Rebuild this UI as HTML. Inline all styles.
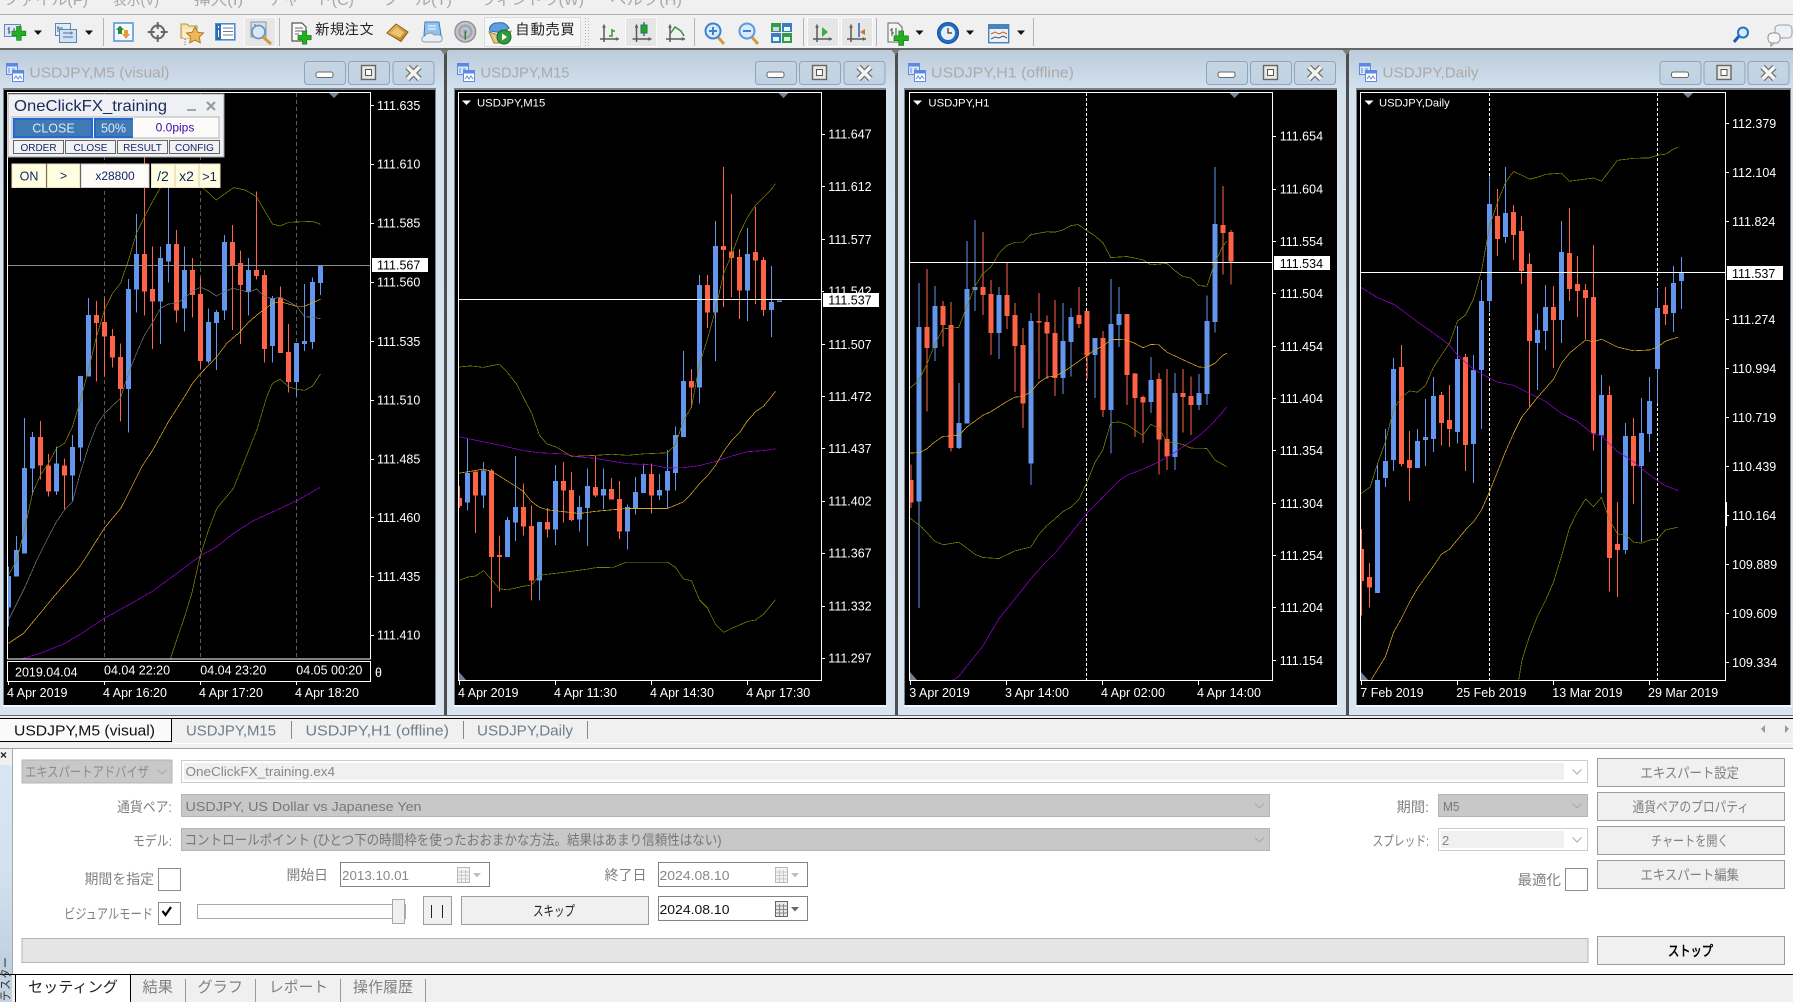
<!DOCTYPE html>
<html lang="ja"><head><meta charset="utf-8"><title>MT4 Strategy Tester</title>
<style>
html,body{margin:0;padding:0;background:#f0f0f0;width:1793px;height:1002px;overflow:hidden}
svg{display:block;position:absolute;left:0;top:0}
text{font-family:"Liberation Sans",sans-serif}
.jp{font-family:"Liberation Sans","IPAGothic","Noto Sans CJK JP",sans-serif;fill:#808080;font-size:14px}
.dk{fill:#222}
.ax{fill:#fff;font-size:12.5px}
.ti{fill:#aaa;font-size:14.5px}
.tb{fill:#6f7d8c;font-size:14.5px}
.in{fill:#888;font-size:13px}
.w{stroke-width:1;fill:none;vector-effect:non-scaling-stroke;shape-rendering:crispEdges}
.l{stroke-width:.75;fill:none;vector-effect:non-scaling-stroke;shape-rendering:crispEdges}
.cr{shape-rendering:crispEdges}
.p{fill:#14246a;font-size:10px}
</style></head><body>
<svg width="1793" height="1002" viewBox="0 0 1793 1002" xmlns="http://www.w3.org/2000/svg">
<defs>
<linearGradient id="gt" x1="0" y1="0" x2="0" y2="1"><stop offset="0" stop-color="#bccbda"/><stop offset=".062" stop-color="#d4e2ef"/><stop offset="1" stop-color="#d8e5f1"/></linearGradient>
<linearGradient id="gb" x1="0" y1="0" x2="0" y2="1"><stop offset="0" stop-color="#c6d5e3"/><stop offset="1" stop-color="#c0d2e3"/></linearGradient>
<linearGradient id="gs" x1="0" y1="0" x2="0" y2="1"><stop offset="0" stop-color="#d9e6f3"/><stop offset=".5" stop-color="#d3e1ee"/><stop offset="1" stop-color="#b7c9da"/></linearGradient>
<linearGradient id="go" x1="0" y1="0" x2="1" y2="1"><stop offset="0" stop-color="#f0c878"/><stop offset="1" stop-color="#b87818"/></linearGradient>
<radialGradient id="gr"><stop offset="0" stop-color="#5c86b8"/><stop offset=".3" stop-color="#c8ccd0"/><stop offset=".6" stop-color="#9a9ea2"/><stop offset=".8" stop-color="#d0d2d4"/><stop offset="1" stop-color="#8c9094"/></radialGradient>
<clipPath id="c1"><rect x="8" y="93" width="362" height="566"/></clipPath>
<clipPath id="c2"><rect x="459" y="93" width="362" height="588"/></clipPath>
<clipPath id="c3"><rect x="910" y="93" width="362" height="588"/></clipPath>
<clipPath id="c4"><rect x="1361" y="93" width="364" height="588"/></clipPath>
<path id="plus" d="M4 0h4v4h4v4H8v4H4V8H0V4h4z" fill="#22b022" stroke="#1c7c1c" stroke-width=".6"/>
<g id="wi"><rect x=".5" y=".5" width="11" height="11" fill="#dbe7fa" stroke="#5b8ae0"/><rect x=".5" y=".5" width="11" height="3" fill="#5b8ae0"/><path d="M3 5v5M6 6h3" stroke="#5b8ae0" fill="none"/><rect x="6.500" y="7.500" width="11" height="11" fill="#fff" stroke="#5b8ae0"/><rect x="6.500" y="7.500" width="11" height="3" fill="#5b8ae0"/><path d="M8 16l2-3 2 3 2-3 2 3" stroke="#5b8ae0" fill="none"/></g>
<g id="bmin"><rect x=".5" y=".5" width="41" height="23" rx="3" fill="url(#gb)" stroke="#8ea5bc"/><rect x="12" y="11" width="17" height="5.500" rx="2" fill="#fff" stroke="#666"/></g>
<g id="bmax"><rect x=".5" y=".5" width="41" height="23" rx="3" fill="url(#gb)" stroke="#8ea5bc"/><rect x="13.500" y="4.500" width="14" height="14" fill="#e9e9e2" stroke="#666" stroke-width="1.400"/><rect x="17.500" y="8.500" width="6" height="6" fill="#fff" stroke="#555"/></g>
<g id="bx"><rect x=".5" y=".5" width="41" height="23" rx="3" fill="url(#gb)" stroke="#8ea5bc"/><path d="M15 6l12 12M27 6L15 18" stroke="#6e6e6e" stroke-width="6"/><path d="M15 6l12 12M27 6L15 18" stroke="#f4f4f0" stroke-width="3.600"/></g>
<path id="axes" d="M4 1.500V19M0 16H19M2.500 4h3M16.500 14.500v3" stroke="#5a5a5a" stroke-width="1.500" fill="none"/>
<path id="da" d="M-4 0h8l-4 4.500z" fill="#111"/>
<path id="che" d="M-4.500 -2l4.500 4.500 4.500-4.500" fill="none" stroke="#a8a8a8"/>
<g id="cal"><rect x=".5" y=".5" width="12" height="15" fill="#e8e8e8" stroke="#666"/><path d="M1 5h11M1 8.500h11M1 12h11M4.500 3v12M8.500 3v12" stroke="#888" fill="none"/></g>
</defs>

<!-- menu + toolbar -->
<rect x="0" y="0" width="1793" height="49" fill="#f0f0f0"/>
<g class="jp" style="font-size:14.500px;fill:#a8a8a8">
<text x="3" y="5" textLength="85" lengthAdjust="spacingAndGlyphs">ファイル(F)</text>
<text x="113" y="5" textLength="46" lengthAdjust="spacingAndGlyphs">表示(V)</text>
<text x="194" y="5" textLength="49" lengthAdjust="spacingAndGlyphs">挿入(I)</text>
<text x="268" y="5" textLength="86" lengthAdjust="spacingAndGlyphs">チャート(C)</text>
<text x="382" y="5" textLength="70" lengthAdjust="spacingAndGlyphs">ツール(T)</text>
<text x="480" y="5" textLength="104" lengthAdjust="spacingAndGlyphs">ウィンドウ(W)</text>
<text x="610" y="5" textLength="72" lengthAdjust="spacingAndGlyphs">ヘルプ(H)</text>
</g>
<rect x="0" y="14" width="1793" height="1" fill="#b0b0b0" class="cr"/>
<rect x="0" y="48" width="1793" height="2" fill="#666" class="cr"/>
<g stroke="#b4b4b4" class="cr"><path d="M103.500 18V46M279.500 18V46M694.500 18V46M803.500 18V46M876.500 18V46M1033.500 18V46"/><path d="M585.500 18V46M588.500 18V46" stroke-dasharray="1 2"/></g>
<g fill="#e6e6e6" stroke="#fafafa" class="cr"><rect x="244.500" y="17.500" width="31" height="29"/><rect x="625.500" y="17.500" width="31" height="29"/><rect x="807.500" y="17.500" width="31" height="29"/><rect x="841.500" y="17.500" width="31" height="29"/></g>
<rect x="484.500" y="17.500" width="96" height="29" fill="#f6f6f6" stroke="#dcdcdc" class="cr"/>

<!-- new chart -->
<g transform="translate(4 24)"><rect x=".5" y=".5" width="16" height="12" fill="#dce8f5" stroke="#5b8bbf"/><path d="M5 3v7M3.500 5h1.500M5 8h1.500M10 4v6" stroke="#446" fill="none"/><use href="#plus" transform="translate(8 2.500) scale(1.150)"/></g>
<use href="#da" x="38" y="30.500"/>
<!-- profiles -->
<g transform="translate(55 23)"><rect x=".5" y=".5" width="15" height="12" fill="#e3edf7" stroke="#5f86b3"/><rect x="4.500" y="6.500" width="17" height="13" fill="#d0e1f3" stroke="#5f86b3"/><path d="M3 3v6M2 5h6M8 10h10M8 14h10M16 8.500v3" stroke="#4d6f99" fill="none"/></g>
<use href="#da" x="89" y="30.500"/>
<!-- market watch -->
<g transform="translate(113 22)"><rect x="1" y="1" width="19" height="18" fill="#f4f8fc" stroke="#5b9ad5" stroke-width="1.600"/><path d="M7 3.500l4 4.500H9v4H5V8H3z" fill="#2f8a32"/><path d="M11 8h4v4h2l-4 5-4-5h2z" fill="#e69a3a"/></g>
<!-- crosshair -->
<g transform="translate(157.700 32)" fill="none" stroke="#666"><circle r="6.500" stroke-width="2"/><path d="M0-10V-3M0 3V10M-10 0H-3M3 0H10" stroke-width="2"/></g>
<!-- folder star -->
<g transform="translate(180 21)"><path d="M1 3h6l2 2h8v12H1z" fill="#f7e3a8" stroke="#b5923f"/><path d="M3 8h13v9H3z" fill="#fbeec8"/><path d="M15 6l2.700 5.200 5.800.8-4.200 4 1 5.800-5.300-2.700-5.300 2.700 1-5.800-4.200-4 5.800-.8z" fill="#eeb85a" stroke="#b07c20"/><path d="M5 18v6" stroke="#666" stroke-dasharray="1 1.500"/></g>
<!-- terminal -->
<g transform="translate(215 23)"><rect x=".8" y=".8" width="19" height="16" fill="#fff" stroke="#4a8ed0" stroke-width="1.600"/><rect x="1" y="1" width="5" height="16" fill="#2f6fb0"/><path d="M8 5h10M8 8.500h10M8 12h10" stroke="#707c90" fill="none"/><path d="M3.500 3v2M3.500 7v7" stroke="#fff" fill="none"/></g>
<!-- tester -->
<g transform="translate(250 21)"><rect x="1" y="1" width="15" height="15" fill="#d8dfe8" stroke="#8a96a4"/><path d="M5 3v9M3.500 6h1.500" stroke="#667" fill="none"/><circle cx="8.500" cy="11" r="6.500" fill="#d8e8f6" stroke="#6f96bd" stroke-width="1.800"/><path d="M13 16l8 7" stroke="#d49a3a" stroke-width="3"/></g>
<!-- new order -->
<g transform="translate(291 22)"><path d="M1 1h10l4 4v14H1z" fill="#fbfbfb" stroke="#555" stroke-width="1.200"/><path d="M4 6h8M4 9h8M4 12h4" stroke="#666" fill="none"/><use href="#plus" transform="translate(7 9) scale(1.100)"/></g>
<text x="315" y="34.500" class="jp dk" style="font-size:15px" textLength="59" lengthAdjust="spacingAndGlyphs">新規注文</text>
<!-- orange book -->
<g transform="translate(387 23)"><path d="M0 10L9 1l12 8-7 9.500z" fill="url(#go)" stroke="#8a5a14"/><path d="M4 10l6-5 7 4.500-4 5z" fill="#eec472"/></g>
<!-- blue cloud book -->
<g transform="translate(421 21)"><path d="M4 1h14l2 13H3z" fill="#8fc2ee" stroke="#3f79b8"/><path d="M7 5h8M7 8h8" stroke="#fff" fill="none"/><path d="M4 21c-4.500 0-4-6 0-6 1-3 7-4 9-1 6-1 9 1 8 4 0 2-1 3-3 3z" fill="#e9eef3" stroke="#8a9bad"/></g>
<!-- radar -->
<g transform="translate(465.300 31.700)"><circle r="10.500" fill="url(#gr)" stroke="#8a8e92"/><path d="M0 0V8" stroke="#3a7a3a" stroke-width="1.500"/></g>
<!-- auto trading -->
<g transform="translate(488 21)"><path d="M2 10c-2-4 3-9 8-8 4-1 8 0 11 5l-6 5z" fill="#5d9fe0" stroke="#2d6cab"/><path d="M1 11l9 3 13-4-4 12H6z" fill="#e9c987" stroke="#9d8245"/><circle cx="16" cy="16" r="7" fill="#2f9c3a" stroke="#16682a"/><path d="M14 12.500l5 3.500-5 3.500z" fill="#fff"/></g>
<text x="515" y="34.500" class="jp dk" style="font-size:15px" textLength="60" lengthAdjust="spacingAndGlyphs">自動売買</text>

<g transform="translate(600 23)"><use href="#axes"/><path d="M9 13h3V6M12 8h3" stroke="#2e9e2e" stroke-width="1.500" fill="none"/></g>
<g transform="translate(632.500 23)"><use href="#axes"/><path d="M11.500 -1v14" stroke="#222"/><rect x="8.500" y="2" width="6" height="8" fill="#28a028" stroke="#176"/></g>
<g transform="translate(666 23)"><use href="#axes"/><path d="M4 11L9 4l6 4 3 5" stroke="#3a8f3a" stroke-width="1.500" fill="none"/></g>
<g transform="translate(704 22)"><path d="M13 14l7 8" stroke="#d69a3c" stroke-width="3"/><circle cx="9" cy="9" r="7.500" fill="#dbeafa" stroke="#3d82cf" stroke-width="2"/><path d="M5 9h8M9 5v8" stroke="#3d82cf" stroke-width="2"/></g>
<g transform="translate(738 22)"><path d="M13 14l7 8" stroke="#d69a3c" stroke-width="3"/><circle cx="9" cy="9" r="7.500" fill="#dbeafa" stroke="#5a9ad8" stroke-width="2"/><path d="M5 9h8" stroke="#3d82cf" stroke-width="2"/></g>
<g transform="translate(771 23)"><rect x="0" y="0" width="10" height="9" fill="#2e9e4a"/><rect x="11" y="0" width="10" height="9" fill="#3d7cc4"/><rect x="0" y="10" width="10" height="10" fill="#3d7cc4"/><rect x="11" y="10" width="10" height="10" fill="#2e9e4a"/><rect x="2" y="4" width="6" height="4" fill="#dce"/><rect x="13" y="4" width="6" height="4" fill="#dff"/><rect x="2" y="14" width="6" height="4" fill="#dff"/><rect x="13" y="14" width="6" height="4" fill="#dfd"/></g>
<g transform="translate(813 23)"><use href="#axes"/><path d="M9 4l6 5-6 5z" fill="#3fae3f"/></g>
<g transform="translate(847 23)"><use href="#axes"/><path d="M12 0v14" stroke="#2a5fc0" stroke-width="1.500"/><path d="M13 9l5-3v6z" fill="#d8701a"/></g>
<g transform="translate(887 22)"><path d="M1 1h10l4 4v15H1z" fill="#f4f4f4" stroke="#666"/><path d="M5 6v8M3 8h2M5 11h2M9 6v8" stroke="#444" fill="none"/><g transform="translate(7 9) scale(1.200)"><use href="#plus"/></g></g>
<use href="#da" x="919.500" y="30.500"/>
<g transform="translate(948 33)"><circle r="10.500" fill="#1f6cc4" stroke="#134c8e"/><circle r="7" fill="#e7eef6"/><path d="M0-5V0H4" stroke="#333" stroke-width="1.200" fill="none"/></g>
<use href="#da" x="970" y="30.500"/>
<g transform="translate(988 24)"><rect x=".7" y=".7" width="20" height="18" fill="#eaf1f8" stroke="#4a82bd" stroke-width="1.400"/><rect x="1" y="1" width="20" height="4" fill="#4a82bd"/><path d="M3 10l4-2 4 2 4-2 4 2" stroke="#c0602a" fill="none"/><path d="M3 15l4-2 4 1 4-2 4 2" stroke="#555" fill="none"/></g>
<use href="#da" x="1021" y="30.500"/>
<g transform="translate(1733 26)"><path d="M6 10l-5 6" stroke="#1d5faa" stroke-width="3"/><circle cx="10" cy="6.500" r="5" fill="#d9ebfa" stroke="#1f73c4" stroke-width="2"/></g>
<g transform="translate(1767 24)"><rect x="8" y="1" width="17" height="13" rx="4" fill="#eef1f4" stroke="#9aa0a6"/><rect x="1" y="9" width="12" height="10" rx="4" fill="#f6f6f6" stroke="#8a8f94"/><path d="M4 19v3l3-3" fill="#f6f6f6" stroke="#8a8f94"/></g>

<!-- window bg -->
<rect x="0" y="50" width="1793" height="665" fill="url(#gt)"/>
<g class="cr">
<rect x="3" y="88" width="433" height="618" fill="#7c8288"/>
<rect x="454" y="88" width="432" height="618" fill="#7c8288"/>
<rect x="904" y="88" width="433" height="618" fill="#7c8288"/>
<rect x="1356" y="88" width="435" height="618" fill="#7c8288"/>
<g fill="#000"><rect x="4" y="90" width="431" height="615"/><rect x="455" y="90" width="431" height="615"/><rect x="905" y="90" width="432" height="615"/><rect x="1357" y="90" width="433" height="615"/></g>
<g fill="#f4f8fc"><rect x="3" y="705" width="433" height="2"/><rect x="454" y="705" width="433" height="2"/><rect x="904" y="705" width="434" height="2"/><rect x="1356" y="705" width="436" height="2"/></g>
<g fill="#4e4e4e"><rect x="444" y="50" width="3" height="666"/><rect x="895" y="50" width="3" height="666"/><rect x="1346" y="50" width="3" height="666"/></g>
<rect x="0" y="715" width="1793" height="1" fill="#666"/>
</g>
<g fill="#7e7e72"><path d="M440.500 50h8l-4 5zM891.500 50h8l-4 5zM1342.500 50h8l-4 5z"/></g>

<!-- titles -->
<use href="#wi" x="6" y="63"/><use href="#wi" x="457" y="63"/><use href="#wi" x="908" y="63"/><use href="#wi" x="1359" y="63"/>
<text x="29.500" y="77.500" class="ti" textLength="140" lengthAdjust="spacingAndGlyphs">USDJPY,M5 (visual)</text>
<text x="480.500" y="77.500" class="ti" textLength="89" lengthAdjust="spacingAndGlyphs">USDJPY,M15</text>
<text x="931" y="77.500" class="ti" textLength="143" lengthAdjust="spacingAndGlyphs">USDJPY,H1 (offline)</text>
<text x="1382.500" y="77.500" class="ti" textLength="96" lengthAdjust="spacingAndGlyphs">USDJPY,Daily</text>
<use href="#bmin" x="304" y="61"/><use href="#bmax" x="348" y="61"/><use href="#bx" x="392.500" y="61"/>
<use href="#bmin" x="755" y="61"/><use href="#bmax" x="799" y="61"/><use href="#bx" x="843.500" y="61"/>
<use href="#bmin" x="1206" y="61"/><use href="#bmax" x="1250" y="61"/><use href="#bx" x="1294" y="61"/>
<use href="#bmin" x="1659.500" y="61"/><use href="#bmax" x="1703.500" y="61"/><use href="#bx" x="1747.500" y="61"/>

<!-- CHART 1 -->
<path d="M104.500 93V659M200.500 93V659M296.500 93V659" stroke="#5c5c5c" stroke-dasharray="4 3" class="cr"/>
<g clip-path="url(#c1)"><g transform="translate(.17 200) scale(.33333 .33333)">
<path class="w" stroke="#6495ED" d="M25 1100V1280M49 1008V1130M73 654V1060M97 696V885M169 740V885M217 705V905M241 528V785M265 294V530M385 237V698M409 42V338M481 140V432M505 -60V248M553 140V395M625 325V490M649 330V510M673 105V360M745 174V347M817 288V488M889 429V590M913 252V453M937 232V447M961 195V285"/>
<path class="cr" fill="#6495ED" d="M18 1128h15V1222h-15zM42 1050h15V1130h-15zM66 804h15V1060h-15zM90 711h15V806h-15zM162 790h15V875h-15zM210 741h15V827h-15zM234 528h15V743h-15zM258 345h15V530h-15zM378 267h15V567h-15zM402 162h15V269h-15zM474 174h15V305h-15zM498 132h15V185h-15zM546 210h15V326h-15zM618 366h15V485h-15zM642 336h15V369h-15zM666 126h15V332h-15zM738 210h15V276h-15zM810 296h15V438h-15zM882 429h15V546h-15zM906 423h15V432h-15zM930 246h15V426h-15zM954 195h15V249h-15z"/>
<path class="w" stroke="#FF6347" d="M121 663V838M145 762V890M193 775V927M289 303V545M313 293V530M337 387V503M361 430V665M433 -130V347M457 140V447M529 90V368M577 174V353M601 232V505M697 75V390M721 152V432M769 -25V238M793 210V488M841 260V459M865 372V578"/>
<path class="cr" fill="#FF6347" d="M114 711h15V797h-15zM138 796h15V875h-15zM186 796h15V827h-15zM282 345h15V369h-15zM306 366h15V410h-15zM330 408h15V473h-15zM354 471h15V567h-15zM426 162h15V275h-15zM450 267h15V305h-15zM522 132h15V332h-15zM570 210h15V285h-15zM594 282h15V483h-15zM690 126h15V195h-15zM714 189h15V255h-15zM762 210h15V228h-15zM786 225h15V447h-15zM834 293h15V459h-15zM858 456h15V546h-15z"/>
<polyline class="l" stroke="#9400D3" points="60,1378 120,1360 195,1330 240,1303 312,1255 385,1215 455,1175 530,1120 600,1068 650,1040 700,1000 760,962 830,930 890,902 960,862"/>
<polyline class="l" stroke="#DAA520" points="25,1330 70,1300 120,1240 165,1185 235,1105 265,1060 312,985 362,925 385,880 425,800 458,750 505,665 553,590 577,550 600,522 650,470 680,430 717,398 745,367 770,345 817,310 841,305 889,319 913,319 961,298"/>
<polyline class="l" stroke="#707070" points="25,1260 50,1210 75,1160 110,1080 145,1010 169,965 193,930 217,905 240,820 265,740 290,675 313,640 361,595 385,520 409,460 433,405 457,368 481,325 505,312 529,310 553,295 577,273 601,262 625,272 649,288 673,275 697,265 721,270 745,277 769,267 793,290 817,296 841,292 865,305 889,318 913,350 937,352 961,356"/>
<polyline class="l" stroke="#808000" points="25,1125 50,1080 73,990 97,880 121,825 145,790 169,745 193,730 217,680 241,600 265,510 289,410 313,330 337,280 361,250 385,180 409,100 433,50 457,5 494,-60 530,-50 609,-36 648,0 700,-37 735,-30 769,-10 795,35 817,72 840,78 865,67 937,64 961,73"/>
<polyline class="l" stroke="#808000" points="510,1378 555,1245 575,1180 600,1068 625,990 650,925 700,865 730,790 770,690 800,590 817,550 840,537 865,560 890,568 913,571 937,558 961,522"/>
</g></g>
<path d="M8 265.500H371" stroke="#8c8c8c" class="cr"/>
<rect x="7.500" y="92.500" width="363" height="566.500" fill="none" stroke="#fff" class="cr"/>
<rect x="7.500" y="661.500" width="363" height="20" fill="none" stroke="#fff" class="cr"/>
<path d="M370 105.500h4M370 164.500h4M370 223.500h4M370 282.500h4M370 341.500h4M370 400.500h4M370 459.500h4M370 517.500h4M370 576.500h4M370 635.500h4M8.500 681v4M104.500 681v4M200.500 681v4M296.500 681v4" stroke="#fff" class="cr"/>
<path d="M329 93h10l-5 5z" fill="#72849a"/>
<g class="ax">
<text x="377" y="110">111.635</text><text x="377" y="168.500">111.610</text><text x="377" y="227.500">111.585</text><text x="377" y="286.500">111.560</text><text x="377" y="346">111.535</text><text x="377" y="404.500">111.510</text><text x="377" y="463.500">111.485</text><text x="377" y="522">111.460</text><text x="377" y="581">111.435</text><text x="377" y="639.500">111.410</text>
<text x="15" y="676.500">2019.04.04</text><text x="104" y="674.500">04.04 22:20</text><text x="200.300" y="674.500">04.04 23:20</text><text x="296.300" y="674.500">04.05 00:20</text>
<text x="375" y="677">θ</text>
<text x="7" y="697">4 Apr 2019</text><text x="103" y="697">4 Apr 16:20</text><text x="199" y="697">4 Apr 17:20</text><text x="295" y="697">4 Apr 18:20</text>
</g>
<rect x="372" y="258" width="56" height="14" fill="#fff" class="cr"/><text x="377" y="269.500" style="font-size:12.500px;fill:#000">111.567</text>

<!-- EA panel -->
<g class="cr">
<rect x="8" y="94" width="216" height="63" fill="#eef0f4" stroke="#a0a4a8"/>
<rect x="12" y="117" width="207" height="21" fill="#fdfafa" stroke="#b4b4b4"/>
<rect x="13" y="118" width="80" height="20" fill="#3f7ab5"/><rect x="14" y="118" width="78" height="2" fill="#2668d0"/><rect x="13" y="118" width="2" height="20" fill="#2668d0"/><rect x="91" y="118" width="2" height="20" fill="#2668d0"/><rect x="13" y="136" width="80" height="2" fill="#2668d0"/>
<rect x="94" y="118" width="39" height="20" fill="#3f7ab5"/><rect x="94" y="118" width="2" height="20" fill="#2668d0"/><rect x="94" y="118" width="39" height="2" fill="#2668d0"/><rect x="94" y="136" width="39" height="2" fill="#2668d0"/>
<g fill="#f2f2f2" stroke="#666"><rect x="13.500" y="140.500" width="50" height="13"/><rect x="65.500" y="140.500" width="50" height="13"/><rect x="117.500" y="140.500" width="50" height="13"/><rect x="169.500" y="140.500" width="50" height="13"/></g>
<g fill="#fffee0" stroke="#efe4c8"><rect x="12" y="164" width="34" height="23.500"/><rect x="47.500" y="164" width="32" height="23.500"/><rect x="151.500" y="164" width="23" height="23.500"/><rect x="175.500" y="164" width="23" height="23.500"/><rect x="199.500" y="164" width="20.500" height="23.500"/></g>
<rect x="81" y="164" width="68" height="23.500" fill="#fffcf8" stroke="#d0d0d0"/>
</g>
<text x="14" y="111" style="font-size:16px;fill:#1a2a5a" textLength="153" lengthAdjust="spacingAndGlyphs">OneClickFX_training</text>
<path d="M187 110h9" stroke="#8c8c8c" stroke-width="1.500"/><path d="M207 102l8 8M215 102l-8 8" stroke="#9a9a9a" stroke-width="2.200"/>
<text x="53.500" y="132.500" text-anchor="middle" style="font-size:12.500px;fill:#dbe9f7">CLOSE</text>
<text x="113.500" y="132.500" text-anchor="middle" style="font-size:12.500px;fill:#dbe9f7">50%</text>
<text x="175" y="131.500" text-anchor="middle" style="font-size:12px;fill:#3a0aa8">0.0pips</text>
<text x="38.500" y="151" text-anchor="middle" class="p">ORDER</text><text x="90.500" y="151" text-anchor="middle" class="p">CLOSE</text><text x="142.500" y="151" text-anchor="middle" class="p">RESULT</text><text x="194.500" y="151" text-anchor="middle" class="p">CONFIG</text>
<text x="29" y="180.500" text-anchor="middle" style="font-size:12.500px;fill:#14246a">ON</text>
<text x="63.500" y="180" text-anchor="middle" style="font-size:12.500px;fill:#14246a">&gt;</text>
<text x="115" y="180" text-anchor="middle" style="font-size:12px;fill:#14246a">x28800</text>
<text x="163" y="181" text-anchor="middle" style="font-size:14px;fill:#14246a">/2</text>
<text x="186.500" y="181" text-anchor="middle" style="font-size:14px;fill:#14246a">x2</text>
<text x="209.500" y="181" text-anchor="middle" style="font-size:13px;fill:#14246a">&gt;1</text>

<!-- CHART 2 -->
<g clip-path="url(#c2)"><g transform="translate(450.17 150) scale(.33333 .3635)">
<path class="w" stroke="#6495ED" d="M52 795V992M100 858V985M172 1010V1119M196 842V1075M268 1023V1240M316 867V1086M388 950V1050M412 876V1090M460 876V988M532 975V1099M556 900V1003M580 862V943M628 892V963M652 825V985M676 760V937M700 553V790M748 344V698M796 195V580M892 215V470M964 319V514"/>
<path class="cr" fill="#6495ED" d="M45 888h15V970h-15zM93 882h15V951h-15zM165 1018h15V1119h-15zM189 982h15V1025h-15zM261 1023h15V1185h-15zM309 911h15V1044h-15zM381 982h15V1017h-15zM405 925h15V985h-15zM453 933h15V951h-15zM525 982h15V1050h-15zM549 941h15V986h-15zM573 891h15V943h-15zM621 935h15V951h-15zM645 883h15V937h-15zM669 784h15V888h-15zM693 635h15V790h-15zM741 371h15V654h-15zM789 264h15V447h-15zM885 286h15V387h-15zM957 418h15V440h-15zM981 414h15V418h-15z"/>
<path class="w" stroke="#FF6347" d="M28 925V985M76 885V1053M124 878V1258M148 1060V1215M220 917V1060M244 978V1240M292 985V1066M340 858V1025M364 886V1020M436 842V955M484 903V962M508 911V1070M604 862V1000M724 602V710M772 344V490M820 47V432M844 121V404M868 272V465M916 157V423M940 295V457"/>
<path class="cr" fill="#FF6347" d="M21 957h15V980h-15zM69 884h15V951h-15zM117 882h15V1119h-15zM141 1114h15V1119h-15zM213 982h15V1036h-15zM237 1034h15V1185h-15zM285 1023h15V1044h-15zM333 911h15V937h-15zM357 936h15V1018h-15zM429 927h15V951h-15zM477 933h15V962h-15zM501 960h15V1050h-15zM597 891h15V951h-15zM717 635h15V654h-15zM765 371h15V447h-15zM813 264h15V275h-15zM837 279h15V297h-15zM861 294h15V387h-15zM909 281h15V304h-15zM933 303h15V440h-15z"/>
<polyline class="l" stroke="#9400D3" points="28,789 100,803 148,812 220,827 268,833 340,836 388,845 436,848 484,856 532,863 604,866 652,875 700,874 748,868 796,857 844,842 892,830 940,827 976,822"/>
<polyline class="l" stroke="#DAA520" points="28,889 60,884 100,878 124,884 148,897 196,925 220,940 244,967 268,983 292,990 340,995 388,1000 436,994 484,990 532,986 652,986 700,968 724,945 748,918 772,896 796,868 820,830 844,800 868,778 892,745 916,720 940,705 964,678 976,664"/>
<polyline class="l" stroke="#808000" points="28,597 60,594 100,598 148,589 170,610 200,645 225,690 245,725 268,785 290,808 320,818 364,843 436,840 484,837 532,840 580,836 652,833 676,810 700,745 724,707 748,590 772,520 796,440 820,340 844,290 868,230 892,185 916,152 940,130 964,108 976,92"/>
<polyline class="l" stroke="#808000" points="28,1184 52,1175 76,1172 100,1157 124,1182 148,1207 172,1210 220,1200 244,1197 268,1170 340,1162 412,1153 436,1149 490,1148 528,1134 652,1134 676,1148 700,1180 724,1185 748,1238 772,1260 796,1305 820,1327 844,1316 892,1297 916,1293 940,1277 976,1237"/>
</g></g>
<path d="M459 299.500H821" stroke="#fff" class="cr"/>
<rect x="458.500" y="92.500" width="363" height="588" fill="none" stroke="#fff" class="cr"/>
<path d="M821 134.500h4M821 186.500h4M821 239.500h4M821 291.500h3M821 344.500h4M821 396.500h4M821 448.500h4M821 501.500h4M821 553.500h4M821 606.500h4M821 658.500h4M459.500 681v4M555.500 681v4M651.500 681v4M747.500 681v4" stroke="#fff" class="cr"/>
<path d="M778.500 93h10l-5 5zM459 672l7 8h-7z" fill="#72849a"/>
<path d="M462 100.500h9l-4.500 4.500z" fill="#fff"/>
<text x="477" y="106.500" style="font-size:11.300px;fill:#fff">USDJPY,M15</text>
<g class="ax">
<text x="828.300" y="138.500">111.647</text><text x="828.300" y="191">111.612</text><text x="828.300" y="244">111.577</text><text x="828.300" y="295.500">111.542</text><text x="828.300" y="349">111.507</text><text x="828.300" y="401">111.472</text><text x="828.300" y="453">111.437</text><text x="828.300" y="505.500">111.402</text><text x="828.300" y="557.500">111.367</text><text x="828.300" y="610.500">111.332</text><text x="828.300" y="662.500">111.297</text>
<text x="458" y="697">4 Apr 2019</text><text x="554" y="697">4 Apr 11:30</text><text x="650" y="697">4 Apr 14:30</text><text x="746.300" y="697">4 Apr 17:30</text>
</g>
<rect x="823" y="293" width="56" height="14" fill="#fff" class="cr"/><text x="828.300" y="304.500" style="font-size:12.500px;fill:#000">111.537</text>

<!-- CHART 3 -->
<path d="M1086.500 93V681" stroke="#fff" stroke-dasharray="3 2" class="cr"/>
<g clip-path="url(#c3)"><g transform="translate(900.17 150) scale(.33333 .3635)">
<path class="w" stroke="#6495ED" d="M56 366V1260M104 374V580M176 641V822M200 250V753M224 193V443M296 377V575M392 448V922M488 421V671M512 435V623M584 517V682M632 355V835M656 377V542M752 569V723M824 613V880M896 616V715M920 400V701M944 47V502"/>
<path class="cr" fill="#6495ED" d="M49 487h15V967h-15zM97 429h15V545h-15zM169 751h15V820h-15zM193 382h15V753h-15zM217 377h15V385h-15zM289 399h15V503h-15zM385 470h15V863h-15zM481 525h15V627h-15zM505 459h15V528h-15zM577 517h15V564h-15zM625 479h15V715h-15zM649 451h15V481h-15zM745 633h15V693h-15zM817 668h15V845h-15zM889 668h15V701h-15zM913 470h15V671h-15zM937 204h15V473h-15z"/>
<path class="w" stroke="#FF6347" d="M32 865V985M80 327V720M128 415V540M152 418V830M248 226V454M272 358V564M320 310V492M344 421V666M368 490V765M416 393V630M440 455V630M464 413V677M536 377V490M560 443V630M608 498V734M680 451V702M704 614V790M728 675V806M776 613V893M800 602V880M848 602V777M872 623V784M968 99V342M992 220V370"/>
<path class="cr" fill="#FF6347" d="M25 908h15V970h-15zM73 487h15V545h-15zM121 429h15V481h-15zM145 481h15V820h-15zM241 377h15V399h-15zM265 396h15V503h-15zM313 399h15V457h-15zM337 454h15V539h-15zM361 536h15V698h-15zM409 470h15V475h-15zM433 473h15V505h-15zM457 503h15V627h-15zM529 454h15V479h-15zM553 443h15V565h-15zM601 517h15V715h-15zM673 451h15V619h-15zM697 615h15V682h-15zM721 679h15V695h-15zM769 630h15V797h-15zM793 795h15V843h-15zM841 668h15V679h-15zM865 677h15V701h-15zM961 206h15V228h-15zM985 226h15V307h-15z"/>
<polyline class="l" stroke="#9400D3" points="155,1460 176,1448 200,1420 248,1365 296,1290 344,1235 392,1180 440,1130 464,1110 512,1055 560,1000 608,955 656,910 680,895 728,878 776,858 824,832 872,802 896,787 920,767 944,745 980,707"/>
<polyline class="l" stroke="#DAA520" points="29,834 60,832 80,822 104,803 128,788 176,785 200,762 248,730 272,720 320,692 344,680 368,678 392,665 416,640 440,625 464,622 488,612 536,581 584,550 608,540 632,522 656,521 680,523 704,532 728,544 752,535 776,536 800,556 848,577 896,597 920,598 944,587 968,565 980,559"/>
<polyline class="l" stroke="#808000" points="29,655 55,635 80,590 104,535 128,492 176,488 200,430 224,375 248,340 272,322 296,285 320,263 344,254 368,254 392,233 440,225 464,226 488,220 512,208 534,205 560,222 584,236 608,255 632,296 680,293 728,302 752,316 800,312 824,332 848,348 872,352 896,373 920,375 944,310 968,265 980,250"/>
<polyline class="l" stroke="#808000" points="29,1012 65,1038 104,1076 128,1086 176,1079 200,1095 224,1112 248,1121 296,1124 344,1103 392,1092 416,1058 440,1033 464,1015 488,995 512,983 536,962 560,915 584,860 608,825 632,750 656,748 680,755 704,770 728,785 752,755 776,765 800,802 848,810 872,820 920,821 944,853 980,871"/>
</g></g>
<path d="M910 262.500H1272" stroke="#fff" class="cr"/>
<rect x="909.500" y="92.500" width="363" height="588" fill="none" stroke="#fff" class="cr"/>
<path d="M1272 136.500h4M1272 189.500h4M1272 241.500h4M1272 293.500h4M1272 346.500h4M1272 398.500h4M1272 450.500h4M1272 503.500h4M1272 555.500h4M1272 607.500h4M1272 660.500h4M910.500 681v4M1006.500 681v4M1102.500 681v4M1198.500 681v4" stroke="#fff" class="cr"/>
<path d="M1229.500 93h10l-5 5zM910 672l7 8h-7z" fill="#72849a"/>
<path d="M913 100.500h9l-4.500 4.500z" fill="#fff"/>
<text x="928.400" y="106.500" style="font-size:11.300px;fill:#fff" textLength="61" lengthAdjust="spacingAndGlyphs">USDJPY,H1</text>
<g class="ax">
<text x="1279.700" y="140.500">111.654</text><text x="1279.700" y="193.500">111.604</text><text x="1279.700" y="246">111.554</text><text x="1279.700" y="298">111.504</text><text x="1279.700" y="351">111.454</text><text x="1279.700" y="403">111.404</text><text x="1279.700" y="455">111.354</text><text x="1279.700" y="508">111.304</text><text x="1279.700" y="560">111.254</text><text x="1279.700" y="612">111.204</text><text x="1279.700" y="665">111.154</text>
<text x="909.300" y="697">3 Apr 2019</text><text x="1005" y="697">3 Apr 14:00</text><text x="1101" y="697">4 Apr 02:00</text><text x="1197" y="697">4 Apr 14:00</text>
</g>
<rect x="1274" y="256" width="56" height="14" fill="#fff" class="cr"/><text x="1279.700" y="268" style="font-size:12.500px;fill:#000">111.534</text>

<!-- CHART 4 -->
<path d="M1489.500 93V681M1657.500 93V681" stroke="#fff" stroke-dasharray="3 2" class="cr"/>
<g clip-path="url(#c4)"><g transform="translate(1350.17 90) scale(.33333 .4018)">
<path class="w" stroke="#6495ED" d="M82 932V1252M106 844V988M130 667V948M202 844V941M226 769V936M250 714V901M322 587V880M370 660V978M394 473V844M418 215V553M466 192V381M562 556V747M586 485V647M634 326V630M754 709V1003M826 829V1155M874 767V1125M898 714V901M922 495V780M970 438V602M994 416V545"/>
<path class="cr" fill="#6495ED" d="M75 971h15V1252h-15zM99 923h15V966h-15zM123 694h15V921h-15zM195 874h15V941h-15zM219 864h15V871h-15zM243 762h15V869h-15zM315 670h15V851h-15zM363 697h15V881h-15zM387 525h15V697h-15zM411 284h15V525h-15zM459 306h15V366h-15zM555 597h15V630h-15zM579 540h15V600h-15zM627 403h15V572h-15zM747 759h15V860h-15zM819 861h15V1145h-15zM867 854h15V936h-15zM891 774h15V856h-15zM915 543h15V694h-15zM963 480h15V555h-15zM987 455h15V475h-15z"/>
<path class="w" stroke="#FF6347" d="M34 1093V1308M58 1177V1288M154 635V937M178 849V1023M274 752V885M298 734V888M346 657V948M442 246V413M490 286V423M514 314V483M538 406V790M610 488V692M658 294V525M682 413V565M706 483V620M730 386V897M778 737V1248M802 1025V1262M850 816V1030M946 490V585"/>
<path class="cr" fill="#FF6347" d="M27 1142h15V1222h-15zM51 1212h15V1238h-15zM147 689h15V931h-15zM171 921h15V941h-15zM267 759h15V829h-15zM291 821h15V844h-15zM339 665h15V884h-15zM435 314h15V371h-15zM483 304h15V361h-15zM507 351h15V450h-15zM531 433h15V625h-15zM603 540h15V572h-15zM651 406h15V495h-15zM675 483h15V500h-15zM699 498h15V518h-15zM723 515h15V855h-15zM771 759h15V1165h-15zM795 1130h15V1145h-15zM843 861h15V936h-15zM939 535h15V558h-15z"/>
<polyline class="l" stroke="#9400D3" points="32,491 82,517 130,533 154,547 202,577 250,605 298,635 322,660 370,695 418,717 442,727 490,735 538,755 586,775 634,805 682,825 730,857 754,860 802,900 850,925 898,958 946,985 984,997"/>
<polyline class="l" stroke="#DAA520" points="60,1472 106,1410 130,1350 154,1315 178,1275 202,1240 250,1185 274,1155 298,1143 346,1095 370,1075 394,1045 418,1000 442,950 466,900 490,855 514,815 538,790 562,765 610,720 634,680 658,655 706,622 730,627 754,620 802,640 850,649 898,647 922,640 946,625 984,615"/>
<polyline class="l" stroke="#808000" points="32,1005 60,988 82,930 106,875 130,795 154,765 178,749 202,752 226,735 250,690 274,660 298,630 322,575 346,560 370,520 394,450 418,340 442,280 466,230 490,203 514,212 538,222 562,217 586,210 634,207 658,227 730,219 754,227 802,175 850,170 898,169 922,162 946,160 970,147 984,143"/>
<polyline class="l" stroke="#808000" points="505,1472 515,1420 538,1360 562,1310 586,1270 610,1225 634,1160 658,1090 682,1050 706,1018 730,1037 754,1014 778,1070 802,1105 826,1107 850,1125 874,1128 898,1120 922,1117 946,1095 984,1088"/>
</g></g>
<path d="M1361 272.500H1725" stroke="#fff" class="cr"/>
<rect x="1360.500" y="92.500" width="365" height="588" fill="none" stroke="#fff" class="cr"/>
<path d="M1725 123.500h4M1725 172.500h4M1725 221.500h4M1725 319.500h4M1725 368.500h4M1725 417.500h4M1725 466.500h4M1725 515.500h4M1725 564.500h4M1725 613.500h4M1725 662.500h4M1361.500 681v4M1457.500 681v4M1553.500 681v4M1649.500 681v4M1726.500 502v24" stroke="#fff" class="cr"/>
<path d="M1683 93h10l-5 5zM1361 672l7 8h-7z" fill="#72849a"/>
<path d="M1364.500 100.500h9l-4.500 4.500z" fill="#fff"/>
<text x="1379" y="106.500" style="font-size:11.300px;fill:#fff" textLength="70.700" lengthAdjust="spacingAndGlyphs">USDJPY,Daily</text>
<g class="ax">
<text x="1732" y="127.800">112.379</text><text x="1732" y="176.900">112.104</text><text x="1732" y="225.900">111.824</text><text x="1732" y="323.900">111.274</text><text x="1732" y="372.900">110.994</text><text x="1732" y="421.900">110.719</text><text x="1732" y="471">110.439</text><text x="1732" y="520">110.164</text><text x="1732" y="569">109.889</text><text x="1732" y="618">109.609</text><text x="1732" y="667">109.334</text>
<text x="1360.300" y="697">7 Feb 2019</text><text x="1456.300" y="697">25 Feb 2019</text><text x="1552.300" y="697">13 Mar 2019</text><text x="1648" y="697">29 Mar 2019</text>
</g>
<rect x="1727" y="266" width="56" height="14" fill="#fff" class="cr"/><text x="1732" y="277.800" style="font-size:12.500px;fill:#000">111.537</text>

<!-- tab strip -->
<rect x="0" y="716" width="1793" height="33" fill="#f0f0f0"/>
<rect x="0" y="718" width="1793" height="1" fill="#000" class="cr"/>
<rect x="0" y="719" width="171" height="22" fill="#fafafa" class="cr"/>
<path d="M0 741.500H171.500V719" fill="none" stroke="#000" class="cr"/>
<path d="M172 743.500H1793" stroke="#fff" class="cr"/>
<rect x="0" y="748" width="1793" height="1" fill="#a0a0a0" class="cr"/>
<text x="14" y="735.500" style="font-size:14.500px;fill:#111" textLength="141" lengthAdjust="spacingAndGlyphs">USDJPY,M5 (visual)</text>
<text x="186" y="735.500" class="tb" textLength="90" lengthAdjust="spacingAndGlyphs">USDJPY,M15</text>
<text x="305.500" y="735.500" class="tb" textLength="143.500" lengthAdjust="spacingAndGlyphs">USDJPY,H1 (offline)</text>
<text x="477" y="735.500" class="tb" textLength="96" lengthAdjust="spacingAndGlyphs">USDJPY,Daily</text>
<path d="M291.500 721v18M463.500 721v18M587.500 721v18" stroke="#888" class="cr"/>
<path d="M1765 725v8l-4-4zM1785 725v8l4-4z" fill="#999"/>

<!-- panel -->
<rect x="12" y="749" width="1781" height="225" fill="#fff"/>
<rect x="0" y="749" width="12" height="253" fill="url(#gs)"/>
<rect x="0" y="749" width="12" height="16" fill="#f0f0f0"/>
<rect x="12" y="749" width="1" height="226" fill="#a8a8a8" class="cr"/>
<path d="M1 752.500l5 5M6 752.500l-5 5" stroke="#222" stroke-width="1.300"/>
<rect x="0" y="974" width="1793" height="1" fill="#000" class="cr"/>
<rect x="0" y="975" width="1793" height="27" fill="#f0f0f0"/>
<rect x="0" y="975" width="12" height="27" fill="#c3d3e2"/>
<text transform="translate(10 957) rotate(-90)" text-anchor="end" class="jp" style="font-size:13px;fill:#333" textLength="44" lengthAdjust="spacingAndGlyphs">テスター</text>

<g class="cr">
<rect x="22" y="760" width="150" height="23" fill="#c8c8c8" stroke="#b4b4b4"/>
<rect x="181.500" y="760.500" width="1406" height="22" fill="#fff" stroke="#cccccc"/>
<rect x="184" y="763" width="1380" height="17" fill="#f0f0f0"/>
<rect x="181.500" y="794.500" width="1088" height="22" fill="#c8c8c8" stroke="#b4b4b4"/>
<rect x="181.500" y="828.500" width="1088" height="22" fill="#c8c8c8" stroke="#b4b4b4"/>
<rect x="1438.500" y="794.500" width="149" height="22" fill="#c8c8c8" stroke="#b4b4b4"/>
<rect x="1438.500" y="828.500" width="149" height="22" fill="#fff" stroke="#cccccc"/>
<rect x="1441" y="831" width="123" height="17" fill="#f0f0f0"/>
<rect x="158.500" y="868.500" width="22" height="22" fill="#fff" stroke="#8c8c8c"/>
<rect x="158.500" y="902.500" width="22" height="22" fill="#fff" stroke="#8c8c8c"/>
<rect x="1565.500" y="868.500" width="22" height="22" fill="#fff" stroke="#8c8c8c"/>
<rect x="340.500" y="862.500" width="149" height="24" fill="#fff" stroke="#7c8488"/>
<rect x="658.500" y="862.500" width="149" height="24" fill="#fff" stroke="#7c8488"/>
<rect x="658.500" y="896.500" width="149" height="24" fill="#fff" stroke="#7c8488"/>
<rect x="197.500" y="904.500" width="208" height="14" fill="#fff" stroke="#a8a8a8"/>
<rect x="392.500" y="899.500" width="12" height="24" fill="#f0f0f0" stroke="#a8a8a8"/>
<rect x="423.500" y="896.500" width="28" height="28" fill="#f0f0f0" stroke="#9c9c9c"/>
<rect x="461.500" y="896.500" width="187" height="28" fill="#f0f0f0" stroke="#9c9c9c"/>
<rect x="22" y="938.500" width="1566" height="24" fill="#e5e5e5" stroke="#b4b4b4"/>
<g fill="#f0f0f0" stroke="#9c9c9c"><rect x="1597.500" y="758.500" width="187" height="28"/><rect x="1597.500" y="792.500" width="187" height="28"/><rect x="1597.500" y="826.500" width="187" height="28"/><rect x="1597.500" y="860.500" width="187" height="28"/><rect x="1597.500" y="936.500" width="187" height="28"/></g>
<path d="M431.500 905v13M442.500 905v13" stroke="#222"/>
</g>
<path d="M162.500 911l3 4 5.500-8" fill="none" stroke="#000" stroke-width="2.200"/>

<use href="#che" x="162" y="771.500"/><use href="#che" x="1577" y="771.500"/><use href="#che" x="1259.500" y="805.500"/><use href="#che" x="1259.500" y="839.500"/><use href="#che" x="1577" y="805.500"/><use href="#che" x="1577" y="839.500"/>

<g opacity=".45"><use href="#cal" x="457" y="867"/></g><path d="M473 873h8l-4 4.500z" fill="#c0c0c0"/>
<g opacity=".45"><use href="#cal" x="775" y="867"/></g><path d="M791 873h8l-4 4.500z" fill="#c0c0c0"/>
<use href="#cal" x="775" y="901"/><path d="M791 907h8l-4 4.500z" fill="#666"/>

<g class="jp">
<text x="25" y="777" textLength="124" lengthAdjust="spacingAndGlyphs" style="fill:#8c8c8c">エキスパートアドバイザ</text>
<text x="117" y="812" textLength="55" lengthAdjust="spacingAndGlyphs">通貨ペア:</text>
<text x="133" y="846" textLength="39" lengthAdjust="spacingAndGlyphs">モデル:</text>
<text x="184.500" y="845" textLength="537" lengthAdjust="spacingAndGlyphs" style="fill:#777">コントロールポイント (ひとつ下の時間枠を使ったおおまかな方法。結果はあまり信頼性はない)</text>
<text x="84.500" y="884" textLength="69.500" lengthAdjust="spacingAndGlyphs">期間を指定</text>
<text x="286.500" y="880" textLength="41.500" lengthAdjust="spacingAndGlyphs">開始日</text>
<text x="604.500" y="880" textLength="42" lengthAdjust="spacingAndGlyphs">終了日</text>
<text x="64" y="919" textLength="89" lengthAdjust="spacingAndGlyphs">ビジュアルモード</text>
<text x="533" y="916" textLength="42" lengthAdjust="spacingAndGlyphs" style="fill:#222">スキップ</text>
<text x="1640.500" y="778" textLength="98.500" lengthAdjust="spacingAndGlyphs">エキスパート設定</text>
<text x="1632.500" y="812" textLength="116.500" lengthAdjust="spacingAndGlyphs">通貨ペアのプロパティ</text>
<text x="1651" y="846" textLength="77.500" lengthAdjust="spacingAndGlyphs">チャートを開く</text>
<text x="1640.500" y="880" textLength="98.500" lengthAdjust="spacingAndGlyphs">エキスパート編集</text>
<text x="1668" y="956" textLength="45" lengthAdjust="spacingAndGlyphs" style="fill:#000;font-weight:bold">ストップ</text>
<text x="1396.500" y="812" textLength="32.500" lengthAdjust="spacingAndGlyphs">期間:</text>
<text x="1372.500" y="846" textLength="56.500" lengthAdjust="spacingAndGlyphs">スプレッド:</text>
<text x="1517.500" y="885" textLength="43.500" lengthAdjust="spacingAndGlyphs">最適化</text>
</g>
<text x="185.500" y="776" class="in" textLength="149.500" lengthAdjust="spacingAndGlyphs">OneClickFX_training.ex4</text>
<text x="185.500" y="811" class="in" style="fill:#777" textLength="236" lengthAdjust="spacingAndGlyphs">USDJPY, US Dollar vs Japanese Yen</text>
<text x="342" y="880" class="in" textLength="67" lengthAdjust="spacingAndGlyphs">2013.10.01</text>
<text x="659.500" y="880" class="in" textLength="70" lengthAdjust="spacingAndGlyphs">2024.08.10</text>
<text x="659.500" y="914" style="font-size:13px;fill:#111" textLength="70" lengthAdjust="spacingAndGlyphs">2024.08.10</text>
<text x="1443" y="811" class="in" style="fill:#777" textLength="16.500" lengthAdjust="spacingAndGlyphs">M5</text>
<text x="1442" y="845" class="in">2</text>

<!-- bottom tabs -->
<rect x="15" y="975" width="115" height="27" fill="#fff"/>
<path d="M15.500 975V1002M130.500 975V1002" stroke="#000" class="cr"/>
<path d="M185.500 979V1002M255.500 979V1002M340.500 979V1002M425.500 979V1002" stroke="#9a9a9a" class="cr"/>
<g class="jp" style="font-size:15px">
<text x="28" y="992" textLength="90" lengthAdjust="spacingAndGlyphs" style="fill:#222">セッティング</text>
<text x="142.500" y="992" textLength="30.500" lengthAdjust="spacingAndGlyphs">結果</text>
<text x="197.500" y="992" textLength="45.500" lengthAdjust="spacingAndGlyphs">グラフ</text>
<text x="269" y="992" textLength="59" lengthAdjust="spacingAndGlyphs">レポート</text>
<text x="353" y="992" textLength="60" lengthAdjust="spacingAndGlyphs">操作履歴</text>
</g>
</svg>
</body></html>
